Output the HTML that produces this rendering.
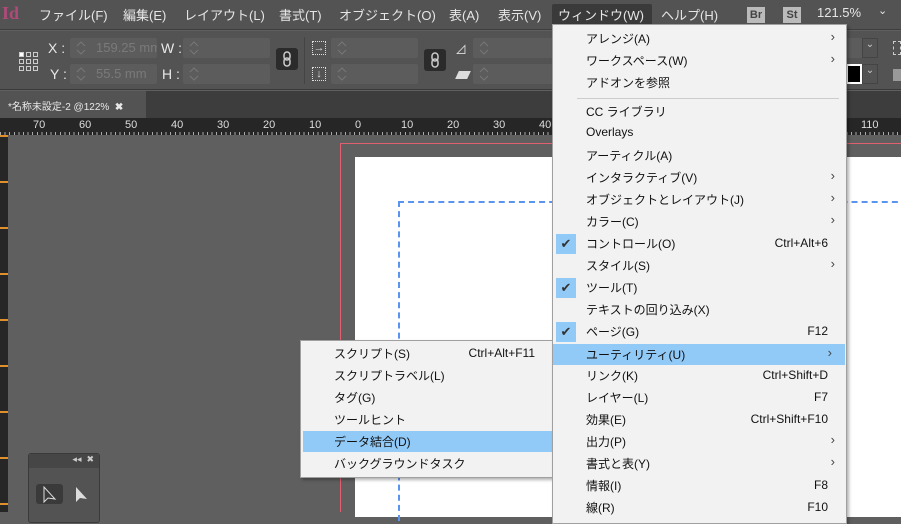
<!DOCTYPE html>
<html><head><meta charset="utf-8"><style>
*{margin:0;padding:0;box-sizing:border-box}
body{width:901px;height:512px;overflow:hidden;background:#5f5f5f;font-family:"Liberation Sans","Noto Sans CJK JP",sans-serif;position:relative}
.a{position:absolute}
#mb{left:0;top:0;width:901px;height:30px;background:#535353;border-bottom:1px solid #3e3e3e;color:#e6e6e6;font-size:13px}
#mb span{position:absolute;top:5px}
#cb{left:0;top:31px;width:901px;height:59px;background:#535353;border-bottom:1px solid #3a3a3a}
.fld{position:absolute;background:#5c5c5c;border-radius:2px;height:20px;color:#7a7a7a;font-size:13px;line-height:20px;padding:0 0 0 26px;white-space:nowrap;overflow:hidden}
.fld svg{position:absolute;left:6px;top:3px}
.lbl{position:absolute;color:#e8e8e8;font-size:14px}
#tb{left:0;top:91px;width:901px;height:27px;background:#3d3d3d}
#tab{left:0;top:91px;width:146px;height:27px;background:#535353;color:#e8e8e8;font-size:10px;padding:7px 0 0 8px}
#ru{left:0;top:118px;width:901px;height:17px;background:#262626;color:#ddd;font-size:11px}
#lr{left:0;top:135px;width:8px;height:377px;background:#262626}
.menu{background:#f2f2f2;border:1px solid #a0a0a0;color:#111;font-size:12px;box-shadow:2px 2px 3px rgba(0,0,0,.3)}
.it{position:absolute;left:0;height:22px;width:100%}
.it .t{position:absolute;left:33px;top:2px}
.it .k{position:absolute;right:18px;top:3px}
.it .s{position:absolute;right:11px;top:1px;font-size:13px;color:#444}
.hl{background:#91c9f7}
.ck{position:absolute;left:3px;width:20px;height:20px;background:#91c9f7;color:#333;font-size:13px;text-align:center;line-height:20px}
.lk{position:absolute;width:22px;height:22px;background:#2b2b2b;border-radius:3px}
</style></head><body>
<div class="a" style="left:340px;top:143px;width:600px;height:1px;background:#e06070"></div>
<div class="a" style="left:340px;top:143px;width:1px;height:369px;background:#e06070"></div>
<div class="a" style="left:355px;top:157px;width:560px;height:360px;background:#fff"></div>
<div class="a" style="left:398px;top:201px;width:520px;height:0;border-top:2px dashed #5b93f0"></div>
<div class="a" style="left:398px;top:201px;width:0;height:320px;border-left:2px dashed #5b93f0"></div>

<div id="mb" class="a">
<span style="left:2px;top:3px;color:#b04a7a;font-size:18px;font-weight:bold;font-family:'Liberation Serif',serif">Id</span>
<span style="left:39px">ファイル(F)</span><span style="left:123px">編集(E)</span><span style="left:184px">レイアウト(L)</span><span style="left:279px">書式(T)</span><span style="left:339px">オブジェクト(O)</span><span style="left:449px">表(A)</span><span style="left:498px">表示(V)</span>
<div class="a" style="left:552px;top:4px;width:100px;height:22px;background:#3a3a3a;border-radius:2px"></div>
<span style="left:558px">ウィンドウ(W)</span><span style="left:661px">ヘルプ(H)</span>
<div class="a" style="left:747px;top:7px;width:18px;height:16px;background:#bbb;color:#444;font-size:11px;font-weight:bold;text-align:center;line-height:16px">Br</div>
<div class="a" style="left:783px;top:7px;width:18px;height:16px;background:#bbb;color:#444;font-size:11px;font-weight:bold;text-align:center;line-height:16px">St</div>
<span style="left:817px">121.5%</span><span style="left:878px;top:4px;font-size:11px">⌄</span>
</div>

<div id="cb" class="a">
<svg class="a" style="left:18px;top:20px" width="22" height="20" viewBox="0 0 22 20" fill="none" stroke="#ccc"><g><rect x="1.5" y="1.5" width="4" height="4" fill="#fff"/><rect x="8.5" y="1.5" width="4" height="4"/><rect x="15.5" y="1.5" width="4" height="4"/><rect x="1.5" y="8.5" width="4" height="4"/><rect x="8.5" y="8.5" width="4" height="4"/><rect x="15.5" y="8.5" width="4" height="4"/><rect x="1.5" y="15.5" width="4" height="4"/><rect x="8.5" y="15.5" width="4" height="4"/><rect x="15.5" y="15.5" width="4" height="4"/></g></svg>
<div class="lbl" style="left:48px;top:9px">X :</div><div class="lbl" style="left:50px;top:35px">Y :</div>
<div class="fld" style="left:70px;top:7px;width:87px"><svg width="10" height="14"><path d="M1 5L5 1L9 5M1 9L5 13L9 9" fill="none" stroke="#777"/></svg>159.25 mm</div>
<div class="fld" style="left:70px;top:33px;width:87px"><svg width="10" height="14"><path d="M1 5L5 1L9 5M1 9L5 13L9 9" fill="none" stroke="#777"/></svg>55.5 mm</div>
<div class="lbl" style="left:161px;top:9px">W :</div><div class="lbl" style="left:162px;top:35px">H :</div>
<div class="fld" style="left:183px;top:7px;width:87px"><svg width="10" height="14"><path d="M1 5L5 1L9 5M1 9L5 13L9 9" fill="none" stroke="#777"/></svg></div>
<div class="fld" style="left:183px;top:33px;width:87px"><svg width="10" height="14"><path d="M1 5L5 1L9 5M1 9L5 13L9 9" fill="none" stroke="#777"/></svg></div>
<div class="lk" style="left:276px;top:17px"><svg width="22" height="22"><rect x="8" y="4" width="6" height="8" rx="3" fill="none" stroke="#ccc" stroke-width="1.5"/><rect x="8" y="10" width="6" height="8" rx="3" fill="none" stroke="#ccc" stroke-width="1.5"/></svg></div>
<div class="a" style="left:304px;top:6px;width:1px;height:47px;background:#444"></div>
<div class="a" style="left:312px;top:10px;width:14px;height:14px;border:1px dotted #ddd;color:#ddd;font-size:11px;line-height:12px;text-align:center">→</div>
<div class="a" style="left:312px;top:36px;width:14px;height:14px;border:1px dotted #ddd;color:#ddd;font-size:11px;line-height:12px;text-align:center">↓</div>
<div class="fld" style="left:331px;top:7px;width:87px"><svg width="10" height="14"><path d="M1 5L5 1L9 5M1 9L5 13L9 9" fill="none" stroke="#777"/></svg></div>
<div class="fld" style="left:331px;top:33px;width:87px"><svg width="10" height="14"><path d="M1 5L5 1L9 5M1 9L5 13L9 9" fill="none" stroke="#777"/></svg></div>
<div class="lk" style="left:424px;top:18px"><svg width="22" height="22"><rect x="8" y="4" width="6" height="8" rx="3" fill="none" stroke="#ccc" stroke-width="1.5"/><rect x="8" y="10" width="6" height="8" rx="3" fill="none" stroke="#ccc" stroke-width="1.5"/></svg></div>
<div class="a" style="left:455px;top:10px;color:#ddd;font-size:12px">⊿</div>
<div class="a" style="left:457px;top:40px;width:12px;height:8px;background:#ddd;transform:skewX(-25deg)"></div>
<div class="fld" style="left:473px;top:7px;width:87px"><svg width="10" height="14"><path d="M1 5L5 1L9 5M1 9L5 13L9 9" fill="none" stroke="#777"/></svg></div>
<div class="fld" style="left:473px;top:33px;width:87px"><svg width="10" height="14"><path d="M1 5L5 1L9 5M1 9L5 13L9 9" fill="none" stroke="#777"/></svg></div>
<div class="a" style="left:846px;top:7px;width:16px;height:20px;background:#5c5c5c"></div>
<div class="a" style="left:862px;top:7px;width:16px;height:20px;border:1px solid #444;color:#ccc;font-size:10px;text-align:center">⌄</div>
<div class="a" style="left:846px;top:33px;width:16px;height:20px;background:#000;border:2px solid #fff"></div>
<div class="a" style="left:862px;top:33px;width:16px;height:20px;border:1px solid #444;color:#ccc;font-size:10px;text-align:center">⌄</div>
<div class="a" style="left:893px;top:10px;width:8px;height:14px;border:1px dashed #ccc"></div>
<div class="a" style="left:893px;top:38px;width:8px;height:12px;background:#999"></div>
</div>

<div id="tb" class="a"></div>
<div id="tab" class="a">*名称未設定-2 @122% &nbsp;<b>✖</b></div>
<div id="ru" class="a">
<div class="a" style="left:0;top:14px;width:901px;height:3px;background:repeating-linear-gradient(90deg,#aaa 0 1px,transparent 1px 4.6px)"></div>
<span class="a" style="left:33px;top:1px">70</span><span class="a" style="left:79px;top:1px">60</span><span class="a" style="left:125px;top:1px">50</span><span class="a" style="left:171px;top:1px">40</span><span class="a" style="left:217px;top:1px">30</span><span class="a" style="left:263px;top:1px">20</span><span class="a" style="left:309px;top:1px">10</span><span class="a" style="left:355px;top:1px">0</span><span class="a" style="left:401px;top:1px">10</span><span class="a" style="left:447px;top:1px">20</span><span class="a" style="left:493px;top:1px">30</span><span class="a" style="left:539px;top:1px">40</span><span class="a" style="left:861px;top:1px">110</span>
</div>
<div id="lr" class="a" style="background:#262626 repeating-linear-gradient(180deg,#e0902a 0 2px,transparent 2px 46px)"></div>

<div class="a" style="left:28px;top:453px;width:72px;height:70px;background:#535353;border:1px solid #3a3a3a;border-radius:3px">
<div style="height:14px;background:#464646;color:#ccc;font-size:9px;text-align:right;padding-right:5px">◂◂ &nbsp;✖</div>
<div class="a" style="left:7px;top:30px;width:27px;height:20px;background:#3a3a3a;border-radius:3px"></div>
<svg class="a" style="left:12px;top:32px" width="60" height="18"><path d="M3 1 L3 16 L7 12 L14 13 Z" fill="none" stroke="#ddd"/><path d="M35 1 L35 16 L39 12 L46 13 Z" fill="#ddd"/></svg>
</div>

<div class="a menu" style="left:300px;top:340px;width:254px;height:138px">
<div class="it" style="top:2px"><span class="t">スクリプト(S)</span><span class="k">Ctrl+Alt+F11</span></div>
<div class="it" style="top:24px"><span class="t">スクリプトラベル(L)</span></div>
<div class="it" style="top:46px"><span class="t">タグ(G)</span></div>
<div class="it" style="top:68px"><span class="t">ツールヒント</span></div>
<div class="it hl" style="top:90px;left:2px;width:249px;height:21px"><span class="t" style="left:31px">データ結合(D)</span></div>
<div class="it" style="top:112px"><span class="t">バックグラウンドタスク</span></div>
</div>

<div class="a menu" style="left:552px;top:24px;width:295px;height:500px">
<div class="it" style="top:3px"><span class="t">アレンジ(A)</span><span class="s">›</span></div>
<div class="it" style="top:25px"><span class="t">ワークスペース(W)</span><span class="s">›</span></div>
<div class="it" style="top:47px"><span class="t">アドオンを参照</span></div>
<div class="a" style="left:24px;top:73px;width:262px;height:1px;background:#ccc"></div>
<div class="it" style="top:76px"><span class="t">CC ライブラリ</span></div>
<div class="it" style="top:98px"><span class="t">Overlays</span></div>
<div class="it" style="top:120px"><span class="t">アーティクル(A)</span></div>
<div class="it" style="top:142px"><span class="t">インタラクティブ(V)</span><span class="s">›</span></div>
<div class="it" style="top:164px"><span class="t">オブジェクトとレイアウト(J)</span><span class="s">›</span></div>
<div class="it" style="top:186px"><span class="t">カラー(C)</span><span class="s">›</span></div>
<div class="it" style="top:208px"><div class="ck" style="top:1px">✔</div><span class="t">コントロール(O)</span><span class="k">Ctrl+Alt+6</span></div>
<div class="it" style="top:230px"><span class="t">スタイル(S)</span><span class="s">›</span></div>
<div class="it" style="top:252px"><div class="ck" style="top:1px">✔</div><span class="t">ツール(T)</span></div>
<div class="it" style="top:274px"><span class="t">テキストの回り込み(X)</span></div>
<div class="it" style="top:296px"><div class="ck" style="top:1px">✔</div><span class="t">ページ(G)</span><span class="k">F12</span></div>
<div class="it hl" style="top:319px;width:292px;height:21px"><span class="t">ユーティリティ(U)</span><span class="s" style="right:13px">›</span></div>
<div class="it" style="top:340px"><span class="t">リンク(K)</span><span class="k">Ctrl+Shift+D</span></div>
<div class="it" style="top:362px"><span class="t">レイヤー(L)</span><span class="k">F7</span></div>
<div class="it" style="top:384px"><span class="t">効果(E)</span><span class="k">Ctrl+Shift+F10</span></div>
<div class="it" style="top:406px"><span class="t">出力(P)</span><span class="s">›</span></div>
<div class="it" style="top:428px"><span class="t">書式と表(Y)</span><span class="s">›</span></div>
<div class="it" style="top:450px"><span class="t">情報(I)</span><span class="k">F8</span></div>
<div class="it" style="top:472px"><span class="t">線(R)</span><span class="k">F10</span></div>
</div>
</body></html>
